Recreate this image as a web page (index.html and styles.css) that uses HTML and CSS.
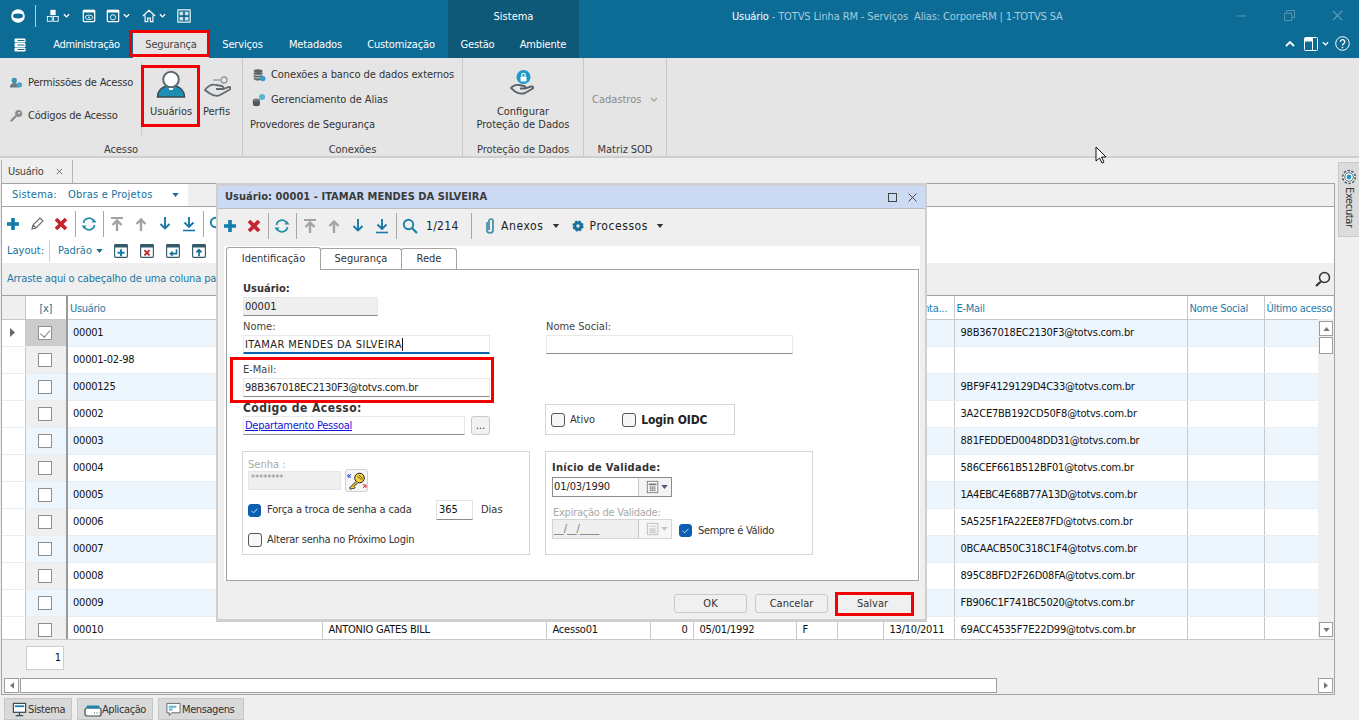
FILE: index.html
```html
<!DOCTYPE html>
<html lang="pt-BR">
<head>
<meta charset="utf-8">
<title>Usuário - TOTVS Linha RM</title>
<link rel="stylesheet" href="styles.css">
</head>
<body>
<svg class="defs" width="0" height="0" aria-hidden="true">
  <symbol id="plus" viewBox="0 0 16 16"><path d="M8 2v12M2 8h12" fill="none" stroke="#0f7cab" stroke-width="3.6"/></symbol>
  <symbol id="cross" viewBox="0 0 16 16"><path d="M3 3l10 10M13 3L3 13" fill="none" stroke="#c4262e" stroke-width="3.8"/></symbol>
  <symbol id="pencil" viewBox="0 0 16 16"><path d="M3 13l1-4 7-7 3 3-7 7z M4 9l3 3" fill="#fff" stroke="#666" stroke-width="1.1"/></symbol>
  <symbol id="refresh" viewBox="0 0 16 16"><path d="M2.5 7A5.6 5.6 0 0 1 12.6 4.6M13.5 9A5.6 5.6 0 0 1 3.4 11.4" fill="none" stroke="#2a8da6" stroke-width="1.7"/><path d="M10.5 6.5h5L13 3zM.5 9.5h5L3 13z" fill="#2a8da6"/></symbol>
  <symbol id="top" viewBox="0 0 16 16"><path d="M2 2h12" stroke="#a3a3a3" stroke-width="2"/><path d="M8 15V5M3.5 9L8 4.5 12.500 9" fill="none" stroke="#a3a3a3" stroke-width="2.400"/></symbol>
  <symbol id="up" viewBox="0 0 16 16"><path d="M8 15V3M3.500 8L8 3.500 12.500 8" fill="none" stroke="#a3a3a3" stroke-width="2.400"/></symbol>
  <symbol id="down" viewBox="0 0 16 16"><path d="M8 1v12M3.500 8L8 12.500 12.500 8" fill="none" stroke="#1a78a8" stroke-width="1.900"/></symbol>
  <symbol id="bottom" viewBox="0 0 16 16"><path d="M8 1v10M3.500 6.500L8 11 12.500 6.500" fill="none" stroke="#1a78a8" stroke-width="1.900"/><path d="M2 14.500h12" stroke="#1a78a8" stroke-width="1.600"/></symbol>
  <symbol id="search" viewBox="0 0 16 16"><circle cx="6.500" cy="6.500" r="4.700" fill="none" stroke="#1a82a8" stroke-width="1.900"/><path d="M10 10l5 5" stroke="#1a82a8" stroke-width="2.200"/></symbol>
  <symbol id="chev" viewBox="0 0 8 6"><path d="M1 1l3 3 3-3" fill="none" stroke="currentColor" stroke-width="1.500"/></symbol>
  <symbol id="tri" viewBox="0 0 8 5"><path d="M0 0h8L4 5z" fill="currentColor"/></symbol>
  <symbol id="check" viewBox="0 0 13 13"><rect x=".5" y=".5" width="12" height="12" rx="2.500" fill="#0c5fb0" stroke="#0c5fb0"/><path d="M3.500 6.800l2 2 4-4" fill="none" stroke="#cfe3f5" stroke-width="1"/></symbol>
  <symbol id="cal" viewBox="0 0 16 16"><rect x="1.500" y="1.500" width="12" height="13" fill="#fff" stroke="#777"/><path d="M3 4h9v2H3z" fill="#777"/><path d="M3.500 8h8M3.500 10h8M3.500 12h8M5.500 7v6M7.500 7v6M9.500 7v6" stroke="#999"/></symbol>
  <symbol id="calg" viewBox="0 0 16 16"><rect x="1.500" y="1.500" width="12" height="13" fill="#f4f4f4" stroke="#bbb"/><path d="M3.500 5h8M3.500 8h8M3.500 10h8M3.500 12h8M5.500 7v6M7.500 7v6M9.500 7v6" stroke="#ccc"/></symbol>
  <symbol id="lay" viewBox="0 0 16 16"><rect x=".7" y=".7" width="14.600" height="14.600" rx="1" fill="#fff" stroke="#34586a" stroke-width="1.300"/><path d="M1 1h14v3H1z" fill="#34586a"/></symbol>
</svg>

<header class="titlebar">
  <div class="quick">
    <svg class="q-logo" viewBox="0 0 16 16"><circle cx="8" cy="8" r="7.800" fill="#fff"/><ellipse cx="8" cy="8" rx="5.800" ry="2.800" fill="#0d6c96"/></svg>
    <span class="q-sep"></span>
    <svg class="q-ic" viewBox="0 0 16 16"><rect x="5" y="1" width="6" height="6" fill="#fff"/><rect x="1.500" y="8.500" width="5.500" height="5.500" fill="none" stroke="#fff"/><rect x="8.500" y="8.500" width="5.500" height="5.500" fill="none" stroke="#fff"/></svg>
    <svg class="q-ch"><use href="#chev"/></svg>
    <svg class="q-ic q-g1" viewBox="0 0 16 16"><rect x="1.500" y="1.500" width="13" height="13" rx="1" fill="none" stroke="#fff" stroke-width="1.400"/><path d="M1 1h14v3H1z" fill="#fff"/><ellipse cx="8" cy="9.500" rx="4.200" ry="2.600" fill="none" stroke="#fff"/><circle cx="8" cy="9.500" r="1" fill="#fff"/></svg>
    <svg class="q-ic q-g2" viewBox="0 0 16 16"><rect x="1.500" y="1.500" width="13" height="13" rx="1" fill="none" stroke="#fff" stroke-width="1.400"/><path d="M1 1h14v3H1z" fill="#fff"/><circle cx="8" cy="9.500" r="3" fill="none" stroke="#fff"/></svg>
    <svg class="q-ch"><use href="#chev"/></svg>
    <svg class="q-ic q-g1" viewBox="0 0 16 16"><path d="M1 8l7-6.500L15 8M3.500 7v7.500h3v-4h3v4h3V7" fill="none" stroke="#fff" stroke-width="1.300"/></svg>
    <svg class="q-ch"><use href="#chev"/></svg>
    <svg class="q-ic q-g3" viewBox="0 0 16 16"><rect x="1" y="1" width="14" height="14" fill="none" stroke="#fff" stroke-width="1.300"/><path d="M3 3h4v4H3zM9 3h4v4H9zM3 9h4v4H3zM9 9h4v4H9z" fill="#cfe0e8"/></svg>
  </div>
  <div class="sys-cell">Sistema</div>
  <div class="win-title"><span class="win-active">Usuário</span> - TOTVS Linha RM - Serviços&nbsp; Alias: CorporeRM | 1-TOTVS SA</div>
  <div class="win-ctl">
    <svg viewBox="0 0 12 12"><path d="M1 6.500h10" stroke="#5f9ab5"/></svg>
    <svg viewBox="0 0 12 12"><path d="M.5 3.500h8v8h-8zM3 3.500V.5h8.500v8h-3" fill="none" stroke="#5f9ab5"/></svg>
    <svg viewBox="0 0 12 12"><path d="M1 1l10 10M11 1L1 11" stroke="#6fa4bc" stroke-width="1.100"/></svg>
  </div>
</header>

<nav class="menubar">
  <svg class="m-stack" viewBox="0 0 12 14"><path d="M1 1h10v3H1zM1 5.500h10v3H1zM1 10h10v3H1z" fill="#fff" stroke="#fff" stroke-linejoin="round"/><path d="M3.500 2.500h7M3.500 7h7M3.500 11.500h7" stroke="#0d6c96"/></svg>
  <a class="m-item m-adm">Administração</a>
  <a class="m-item m-seg mark">Segurança</a>
  <a class="m-item m-srv">Serviços</a>
  <a class="m-item m-met">Metadados</a>
  <a class="m-item m-cus">Customização</a>
  <div class="m-dark"><a class="m-item m-ges">Gestão</a><a class="m-item m-amb">Ambiente</a></div>
  <div class="m-right">
    <svg class="m-up" viewBox="0 0 10 7"><path d="M1 6l4-4 4 4" fill="none" stroke="#fff" stroke-width="1.800"/></svg>
    <svg class="m-lay" viewBox="0 0 14 14"><rect x=".5" y=".5" width="13" height="13" rx="1" fill="none" stroke="#fff"/><path d="M1 1h7v3H1zM8.500 1v12" fill="#fff" stroke="#fff"/></svg>
    <svg class="q-ch"><use href="#chev"/></svg>
    <svg class="m-help" viewBox="0 0 15 15"><circle cx="7.500" cy="7.500" r="6.800" fill="none" stroke="#fff"/><path d="M5.300 5.800a2.200 2.200 0 1 1 3.500 1.800c-.8.600-1.300 1-1.300 2" fill="none" stroke="#fff" stroke-width="1.300"/><path d="M6.800 10.800h1.400v1.400H6.800z" fill="#fff"/></svg>
  </div>
</nav>

<section class="ribbon">
  <div class="rb-group rb-acesso">
    <div class="rb-body">
      <div class="rb-small">
        <div class="rb-line"><svg class="rb-ic" viewBox="0 0 16 16"><circle cx="6" cy="5" r="3" fill="#3d8fb5"/><path d="M1 13c0-3 2-5 5-5s5 2 5 5z" fill="#6d7a80"/><circle cx="12" cy="10" r="3" fill="#3ba9cf"/></svg>Permissões de Acesso</div>
        <div class="rb-line"><svg class="rb-ic" viewBox="0 0 16 16"><circle cx="11" cy="5" r="4" fill="#8b8b8b"/><path d="M8 8l-6 6" stroke="#8b8b8b" stroke-width="2.600"/><circle cx="11.500" cy="4.500" r="1.200" fill="#e5e5e5"/></svg>Códigos de Acesso</div>
      </div>
      <div class="rb-big-usr mark">
        <svg class="i-user" viewBox="0 0 30 28"><path d="M1.500 27c0-6 4-10 9-11h9c5 1 9 5 9 11z" fill="#1e8fb3" stroke="#3a4a52" stroke-width="1.500"/><circle cx="15" cy="9.500" r="7.800" fill="#fff" stroke="#5d6b72" stroke-width="2"/><path d="M12.500 18h5l-1 2h-3z" fill="#fff"/></svg>
        <span>Usuários</span>
      </div>
      <div class="rb-big-per">
        <svg class="i-perfis" viewBox="0 0 28 24"><path d="M2 14c3-4 7-6 11-5l6 1c2 .5 1.500 3-1 3h-5 7l6-2c2 0 2 2 0 3l-9 5c-4 2-8 0-11-2z" fill="none" stroke="#5f6a6f" stroke-width="1.800"/><circle cx="21" cy="4" r="3" fill="none" stroke="#8f9699" stroke-width="1.300"/><path d="M18 4h-8" stroke="#8f9699" stroke-width="1.300"/></svg>
        <span>Perfis</span>
      </div>
    </div>
    <div class="rb-label">Acesso</div>
  </div>
  <div class="rb-group rb-con">
    <div class="rb-body rb-col">
      <div class="rb-row"><svg class="rb-ic" viewBox="0 0 16 16"><ellipse cx="7" cy="3.500" rx="5" ry="2.200" fill="#59646a"/><path d="M2 5v7c0 1.200 2.200 2.200 5 2.200s5-1 5-2.200V5z" fill="#59646a"/><path d="M2 7.500c2 1.300 8 1.300 10 0M2 10.500c2 1.300 8 1.300 10 0" stroke="#e5e5e5" fill="none"/><circle cx="12.500" cy="12" r="3" fill="#2d9fd0"/></svg>Conexões a banco de dados externos</div>
      <div class="rb-row"><svg class="rb-ic" viewBox="0 0 16 16"><path d="M1 8v5c0 1 1.800 2 4 2s4-1 4-2V8z" fill="#4c565b"/><ellipse cx="5" cy="8" rx="4" ry="1.800" fill="#6d777c"/><circle cx="11.500" cy="4.500" r="3.500" fill="#5cb3d8"/></svg>Gerenciamento de Alias</div>
      <div class="rb-row rb-prov">Provedores de Segurança</div>
    </div>
    <div class="rb-label">Conexões</div>
  </div>
  <div class="rb-group rb-pro">
    <div class="rb-body rb-center">
      <svg class="i-prot" viewBox="0 0 28 27"><path d="M2 18c2-2.500 5-3.500 8-3l5 1c2 .5 1.500 2.500-1 2.500h-3 5l6-2c2.500-.5 3 1.500 1 2.500l-7 4c-4 1.500-7 .5-10-1.500z" fill="none" stroke="#55646b" stroke-width="1.900"/><circle cx="14.500" cy="7" r="7" fill="#1c9cc4"/><rect x="11.500" y="6.500" width="6" height="5" rx="1" fill="#fff"/><path d="M12.800 6.500V5a1.700 1.700 0 0 1 3.400 0v1.500" fill="none" stroke="#fff" stroke-width="1.100"/></svg>
      <span class="rb-t1">Configurar</span>
      <span>Proteção de Dados</span>
    </div>
    <div class="rb-label">Proteção de Dados</div>
  </div>
  <div class="rb-group rb-mat">
    <div class="rb-body rb-cad"><span>Cadastros</span><svg class="rb-chev"><use href="#chev"/></svg></div>
    <div class="rb-label">Matriz SOD</div>
  </div>
</section>

<div class="doc-tabs">
  <div class="doc-tab">Usuário <svg class="doc-x" viewBox="0 0 8 8"><path d="M1 1l6 6M7 1L1 7" stroke="#666" stroke-width="1.100"/></svg></div>
</div>

<main class="panel">
  <div class="sys-row">
    <div class="sys-sel"><span class="sys-lab">Sistema:</span><span class="sys-val">Obras e Projetos</span><svg class="tri"><use href="#tri"/></svg></div>
  </div>
  <div class="tools">
    <div class="tool-row">
      <span class="ti"><svg><use href="#plus"/></svg></span>
      <span class="ti"><svg><use href="#pencil"/></svg></span>
      <span class="ti"><svg><use href="#cross"/></svg></span>
      <span class="tsep"></span>
      <span class="ti"><svg><use href="#refresh"/></svg></span>
      <span class="tsep"></span>
      <span class="ti"><svg><use href="#top"/></svg></span>
      <span class="ti"><svg><use href="#up"/></svg></span>
      <span class="ti"><svg><use href="#down"/></svg></span>
      <span class="ti"><svg><use href="#bottom"/></svg></span>
      <span class="tsep"></span>
      <span class="ti"><svg><use href="#search"/></svg></span>
    </div>
    <div class="layout-row">
      <span class="lay-lab">Layout:</span><span class="lay-sep"></span><span class="lay-val">Padrão</span><svg class="tri lay-tri"><use href="#tri"/></svg>
      <span class="lay-ic lay-first"><svg viewBox="0 0 16 16"><use href="#lay"/><path d="M8 6v8M4 10h8" stroke="#0f7cab" stroke-width="2.200"/></svg></span>
      <span class="lay-ic"><svg viewBox="0 0 16 16"><use href="#lay"/><path d="M5 7l6 6M11 7l-6 6" stroke="#c4262e" stroke-width="2.200"/></svg></span>
      <span class="lay-ic"><svg viewBox="0 0 16 16"><use href="#lay"/><path d="M12 6v5H5M7.500 8.500L5 11l2.500 2.500" fill="none" stroke="#1a6f98" stroke-width="1.800"/></svg></span>
      <span class="lay-ic"><svg viewBox="0 0 16 16"><use href="#lay"/><path d="M8 14V7M5 9.500L8 6.500l3 3" fill="none" stroke="#1a6f98" stroke-width="2"/></svg></span>
    </div>
  </div>
  <div class="group-bar">
    <span>Arraste aqui o cabeçalho de uma coluna par</span>
    <svg class="gb-search" viewBox="0 0 16 16"><circle cx="9.500" cy="6.500" r="5" fill="none" stroke="#333" stroke-width="1.500"/><path d="M6 10.500l-5 4.500" stroke="#333" stroke-width="2.200"/></svg>
  </div>
  <div class="grid-wrap">
    <table class="grid">
      <colgroup><col class="c0"><col class="c1"><col class="c2"><col class="c3"><col class="c4"><col class="c5"><col class="c6"><col class="c7"><col class="c8"><col class="c9"><col class="c10"><col class="c11"><col class="c12"></colgroup>
      <thead>
        <tr><th class="h-ind"></th><th class="h-chk">[x]</th><th class="thick-l">Usuário</th><th></th><th></th><th></th><th></th><th></th><th></th><th>Data Conta...</th><th>E-Mail</th><th>Nome Social</th><th class="h-last">Último acesso</th></tr>
      </thead>
      <tbody>
        <tr><td class="ind"><svg class="ind-tri" viewBox="0 0 5 9"><path d="M0 0l5 4.500L0 9z"/></svg></td><td class="chk chk-sel"><i class="cb cb-on"></i></td><td>00001</td><td></td><td></td><td></td><td></td><td></td><td></td><td></td><td>98B367018EC2130F3@totvs.com.br</td><td></td><td></td></tr>
        <tr><td class="ind"></td><td class="chk"><i class="cb"></i></td><td>00001-02-98</td><td></td><td></td><td></td><td></td><td></td><td></td><td></td><td></td><td></td><td></td></tr>
        <tr><td class="ind"></td><td class="chk"><i class="cb"></i></td><td>0000125</td><td></td><td></td><td></td><td></td><td></td><td></td><td></td><td>9BF9F4129129D4C33@totvs.com.br</td><td></td><td></td></tr>
        <tr><td class="ind"></td><td class="chk"><i class="cb"></i></td><td>00002</td><td></td><td></td><td></td><td></td><td></td><td></td><td></td><td>3A2CE7BB192CD50F8@totvs.com.br</td><td></td><td></td></tr>
        <tr><td class="ind"></td><td class="chk"><i class="cb"></i></td><td>00003</td><td></td><td></td><td></td><td></td><td></td><td></td><td></td><td>881FEDDED0048DD31@totvs.com.br</td><td></td><td></td></tr>
        <tr><td class="ind"></td><td class="chk"><i class="cb"></i></td><td>00004</td><td></td><td></td><td></td><td></td><td></td><td></td><td></td><td>586CEF661B512BF01@totvs.com.br</td><td></td><td></td></tr>
        <tr><td class="ind"></td><td class="chk"><i class="cb"></i></td><td>00005</td><td></td><td></td><td></td><td></td><td></td><td></td><td></td><td>1A4EBC4E68B77A13D@totvs.com.br</td><td></td><td></td></tr>
        <tr><td class="ind"></td><td class="chk"><i class="cb"></i></td><td>00006</td><td></td><td></td><td></td><td></td><td></td><td></td><td></td><td>5A525F1FA22EE87FD@totvs.com.br</td><td></td><td></td></tr>
        <tr><td class="ind"></td><td class="chk"><i class="cb"></i></td><td>00007</td><td></td><td></td><td></td><td></td><td></td><td></td><td></td><td>0BCAACB50C318C1F4@totvs.com.br</td><td></td><td></td></tr>
        <tr><td class="ind"></td><td class="chk"><i class="cb"></i></td><td>00008</td><td></td><td></td><td></td><td></td><td></td><td></td><td></td><td>895C8BFD2F26D08FA@totvs.com.br</td><td></td><td></td></tr>
        <tr><td class="ind"></td><td class="chk"><i class="cb"></i></td><td>00009</td><td></td><td></td><td></td><td></td><td></td><td></td><td></td><td>FB906C1F741BC5020@totvs.com.br</td><td></td><td></td></tr>
        <tr class="r-last"><td class="ind"></td><td class="chk"><i class="cb"></i></td><td>00010</td><td>ANTONIO GATES BILL</td><td>Acesso01</td><td class="num">0</td><td>05/01/1992</td><td>F</td><td></td><td>13/10/2011</td><td>69ACC4535F7E22D99@totvs.com.br</td><td></td><td></td></tr>
      </tbody>
    </table>
    <div class="vscroll">
      <span class="sb-btn"><svg class="sb-tri sb-flip"><use href="#tri"/></svg></span>
      <span class="sb-thumb"></span>
      <span class="sb-btn sb-end"><svg class="sb-tri"><use href="#tri"/></svg></span>
    </div>
  </div>
  <div class="grid-foot"><span class="foot-cell">1</span></div>
  <div class="hscroll">
    <span class="hb-btn"><svg class="hb-tri" viewBox="0 0 5 8"><path d="M5 0L0 4l5 4z"/></svg></span>
    <span class="hb-thumb"></span>
    <span class="hb-btn hb-end"><svg class="hb-tri" viewBox="0 0 5 8"><path d="M0 0l5 4-5 4z"/></svg></span>
  </div>
</main>

<footer class="statusbar">
  <span class="st-btn st-a"><svg viewBox="0 0 16 16"><rect x="1.500" y="1.500" width="13" height="9.500" fill="#fff" stroke="#3c4b52" stroke-width="1.300"/><path d="M3 3.500h10v2H3z" fill="#1e86ad"/><path d="M8 11v3M4 14.500h8" stroke="#3c4b52" stroke-width="1.300"/></svg>Sistema</span>
  <span class="st-btn st-b"><svg class="st-wide" viewBox="0 0 18 14"><rect x="1" y="5" width="16" height="8" rx="2" fill="#fff" stroke="#3c4b52" stroke-width="1.200"/><path d="M3 5V3h12v2z" fill="#1e86ad" stroke="#1e86ad"/><path d="M10 10h1M12.500 10h1M15 10h.5" stroke="#3c4b52"/></svg>Aplicação</span>
  <span class="st-btn st-c"><svg viewBox="0 0 16 16"><path d="M1 1.500h14v10H6l-2.500 3v-3H1z" fill="#fff" stroke="#5a6a72"/><path d="M3 4h8v2H3zM3 7h4v2H3z" fill="#5db4d6"/></svg>Mensagens</span>
</footer>

<aside class="exec-tab">
  <svg class="exec-gear" viewBox="0 0 16 16"><circle cx="8" cy="8" r="6.300" fill="#fff" stroke="#56656d" stroke-width="1.700" stroke-dasharray="2.600 1.300"/><circle cx="8" cy="8" r="4.300" fill="#fff" stroke="#56656d"/><circle cx="8" cy="8" r="2.400" fill="#1c9cc4"/></svg>
  <span class="exec-txt">Executar</span>
</aside>

<svg class="cursor" viewBox="0 0 13 18"><path d="M1 1v14l3.500-3 2.500 5 2-1-2.500-5h4.500z" fill="#fff" stroke="#111"/></svg>

<section class="dialog">
  <div class="dlg-title">
    <span>Usuário: 00001 - ITAMAR MENDES DA SILVEIRA</span>
    <span class="dlg-ctl">
      <svg viewBox="0 0 9 9"><rect x=".5" y=".5" width="8" height="8" fill="none" stroke="#444"/></svg>
      <svg viewBox="0 0 9 9"><path d="M.5.5l8 8M8.500.5l-8 8" stroke="#444"/></svg>
    </span>
  </div>
  <div class="dlg-tools">
    <span class="ti"><svg><use href="#plus"/></svg></span>
    <span class="ti"><svg><use href="#cross"/></svg></span>
    <span class="tsep"></span>
    <span class="ti"><svg><use href="#refresh"/></svg></span>
    <span class="tsep"></span>
    <span class="ti"><svg><use href="#top"/></svg></span>
    <span class="ti"><svg><use href="#up"/></svg></span>
    <span class="ti"><svg><use href="#down"/></svg></span>
    <span class="ti"><svg><use href="#bottom"/></svg></span>
    <span class="tsep"></span>
    <span class="ti"><svg><use href="#search"/></svg></span>
    <span class="dlg-count">1/214</span>
    <span class="tsep dlg-sep2"></span>
    <svg class="dlg-clip" viewBox="0 0 12 18"><path d="M3 5v8a3 3 0 0 0 6 0V4a2 2 0 0 0-4 0v9" fill="none" stroke="#3f8ea8" stroke-width="1.700"/></svg>
    <span class="dlg-menu">Anexos</span><svg class="tri dlg-tri"><use href="#tri"/></svg>
    <svg class="dlg-gear" viewBox="0 0 16 16"><circle cx="8" cy="8" r="5.200" fill="#1a6f98" stroke="#1a6f98" stroke-width="2.400" stroke-dasharray="2.400 1.700"/><circle cx="8" cy="8" r="5" fill="#1a6f98"/><circle cx="8" cy="8" r="2" fill="#dbe9f0"/></svg>
    <span class="dlg-menu">Processos</span><svg class="tri dlg-tri"><use href="#tri"/></svg>
  </div>
  <div class="dlg-client">
    <div class="tabs">
      <span class="tab tab-on">Identificação</span>
      <span class="tab tab-seg">Segurança</span>
      <span class="tab tab-rede">Rede</span>
    </div>
    <div class="tab-panel">
      <div class="f-left">
        <label class="lb lb-b">Usuário:</label>
        <div class="inp inp-ro inp-user">00001</div>
        <label class="lb f-gap">Nome:</label>
        <div class="inp inp-focus inp-name inp-caps">ITAMAR MENDES DA SILVEIRA<i class="caret"></i></div>
        <div class="mail-box mark">
          <label class="lb">E-Mail:</label>
          <div class="inp inp-name inp-mail">98B367018EC2130F3@totvs.com.br</div>
        </div>
        <label class="lb lb-b lb-code f-gap">Código de Acesso:</label>
        <div class="code-row">
          <div class="inp inp-code"><a class="link">Departamento Pessoal</a></div>
          <span class="dots">...</span>
        </div>
      </div>
      <div class="f-right">
        <label class="lb nsoc">Nome Social:</label>
        <div class="inp inp-soc"></div>
        <div class="box box-at">
          <span class="cbl"><i class="cb2"></i>Ativo</span>
          <span class="cbl cbl-oidc"><i class="cb2"></i><b>Login OIDC</b></span>
        </div>
      </div>
      <div class="box box-senha">
        <label class="lb lb-dis">Senha :</label>
        <div class="senha-row">
          <div class="inp-pass">********</div>
          <span class="key-btn"><svg viewBox="0 0 20 20"><circle cx="12.500" cy="7" r="4.800" fill="#f3d23a" stroke="#222"/><path d="M9 10.500l-6.500 6.500 1.500 1.500 1.500-1.500 1 1 1.500-1.500-1-1 4-4" fill="#f3d23a" stroke="#222"/><path d="M10.500 5l4 4M12 4l4 4" stroke="#222" stroke-width=".7"/><path d="M1 6l3-3M1 6V3M1 6h3" stroke="#1a3fe0" fill="none"/><path d="M19 14l-3 3M19 14h-3M19 14v3" stroke="#e0202a" fill="none"/></svg></span>
        </div>
        <div class="chk-row">
          <svg class="cb-blue"><use href="#check"/></svg><span class="force">Força a troca de senha a cada</span>
          <span class="inp-days">365</span><span class="dias">Dias</span>
        </div>
        <div class="chk-row chk-row2"><i class="cb2"></i><span class="alt">Alterar senha no Próximo Login</span></div>
      </div>
      <div class="box box-val">
        <label class="lb lb-b lb-ini">Início de Validade:</label>
        <div class="date date-on"><span class="date-v">01/03/1990</span><span class="date-b"><svg class="d-cal"><use href="#cal"/></svg><svg class="d-tri"><use href="#tri"/></svg></span></div>
        <label class="lb lb-dis exp">Expiração de Validade:</label>
        <div class="exp-row">
          <div class="date date-dis"><span class="date-v">__/__/____</span><span class="date-b"><svg class="d-cal"><use href="#calg"/></svg><svg class="d-tri"><use href="#tri"/></svg></span></div>
          <svg class="cb-blue"><use href="#check"/></svg><span class="sempre">Sempre é Válido</span>
        </div>
      </div>
    </div>
  </div>
  <div class="dlg-foot">
    <span class="btn">OK</span>
    <span class="btn">Cancelar</span>
    <span class="btn btn-save mark">Salvar</span>
  </div>
</section>
</body>
</html>
```

FILE: styles.css
```css
*, *::before, *::after { box-sizing: border-box; }
html, body { margin: 0; padding: 0; }
body {
  position: relative;
  width: 1359px;
  height: 720px;
  overflow: hidden;
  background: #efefef;
  color: #333;
  font-family: "DejaVu Sans Condensed", "DejaVu Sans", sans-serif;
  font-stretch: condensed;
  font-size: 11px;
  line-height: 14px;
}
.defs { position: absolute; }
svg { display: block; flex: none; }
i { display: block; }

/* red annotation frames */
.mark { position: relative; }
.mark::after {
  content: "";
  position: absolute;
  border: 3px solid #f40000;
  pointer-events: none;
}

/* title bar */
.titlebar { display: flex; height: 29px; background: #0d6c96; color: #fff; }
.quick { width: 448px; display: flex; align-items: center; padding: 2px 0 0 11px; }
.q-logo { width: 14px; height: 14px; }
.q-sep { width: 1px; height: 22px; background: #b7d2df; margin: 0 10px; }
.q-ic { width: 14px; height: 14px; }
.q-ch { width: 7px; height: 6px; margin-left: 3px; color: #fff; }
.q-g1 { margin-left: 12px; }
.q-g2 { margin-left: 10px; }
.q-g3 { margin-left: 11px; }
.sys-cell { width: 131px; background: #0e5878; text-align: center; line-height: 33px; }
.win-title { padding-left: 153px; line-height: 33px; color: #a5cbdd; white-space: nowrap; flex: 1; letter-spacing: -0.13px; }
.win-active { color: #fff; }
.win-ctl { display: flex; align-items: center; gap: 37px; width: 130px; padding: 2px 0 0 0; margin-right: 16px; justify-content: flex-end; }
.win-ctl svg { width: 11px; height: 11px; }

/* menu */
.menubar { display: flex; height: 29px; background: #0d6c96; color: #fff; line-height: 31px; letter-spacing: -0.15px; }
.m-stack { width: 12px; height: 14px; margin: 9px 14px 0 14px; }
.m-item { display: block; text-align: center; white-space: nowrap; }
.m-adm { width: 93px; letter-spacing: -0.35px; }
.m-seg { width: 76px; background: #e5e5e5; color: #444; margin-top: 3px; line-height: 25px; }
.m-seg::after { left: -4px; right: -1px; top: -2px; bottom: 1px; }
.m-srv { width: 67px; }
.m-met { width: 79px; }
.m-cus { width: 92px; margin-right: 1px; }
.m-dark { display: flex; width: 131px; background: #0e5878; }
.m-ges { width: 59px; }
.m-amb { width: 72px; }
.m-right { flex: 1; display: flex; align-items: center; padding-left: 706px; }
.m-up { width: 10px; height: 7px; }
.m-lay { width: 14px; height: 14px; margin-left: 9px; }
.m-right .q-ch { margin-left: 4px; }
.m-help { width: 15px; height: 15px; margin-left: 6px; }

/* ribbon */
.ribbon { display: flex; height: 100px; background: #e5e5e5; border-bottom: 2px solid #cfcfcf; }
.rb-group { display: flex; flex-direction: column; border-right: 1px solid #c9c9c9; height: 98px; }
.rb-body { flex: 1; display: flex; min-height: 0; }
.rb-label { height: 16px; line-height: 20px; text-align: center; white-space: nowrap; color: #3a3a3a; letter-spacing: -0.05px; }
.rb-acesso { width: 243px; }
.rb-small { width: 142px; border-right: 1px solid #cdcdcd; height: 73px; margin-top: 4px; padding: 14px 0 0 9px; display: flex; flex-direction: column; gap: 19px; }
.rb-line, .rb-row { display: flex; align-items: center; white-space: nowrap; }
.rb-line { letter-spacing: -0.18px; }
.rb-row { letter-spacing: -0.06px; }
.rb-ic { width: 14px; height: 14px; margin-right: 5px; }
.rb-big-usr { width: 58px; display: flex; flex-direction: column; align-items: center; padding-top: 5px; height: 62px; margin-top: 7px; letter-spacing: -0.1px; }
.rb-big-usr::after { left: -1px; right: 0; top: 0; height: 62px; }
.i-user { width: 30px; height: 28px; }
.rb-big-usr span { margin-top: 7px; }
.rb-big-per { width: 33px; display: flex; flex-direction: column; align-items: center; padding-top: 18px; }
.i-perfis { width: 28px; height: 24px; }
.rb-big-per span { margin-top: 5px; }
.rb-con { width: 220px; }
.rb-col { flex-direction: column; padding: 10px 0 0 9px; gap: 11px; }
.rb-prov { margin-left: -2px; }
.rb-pro { width: 121px; }
.rb-center { flex-direction: column; align-items: center; padding-top: 12px; line-height: 13px; }
.i-prot { width: 28px; height: 27px; }
.rb-t1 { margin-top: 8px; }
.rb-mat { width: 83px; }
.rb-cad { color: #8b8b8b; align-items: center; padding: 2px 0 0 8px; }
.rb-chev { width: 8px; height: 6px; margin-left: 9px; color: #a5a5a5; }

/* document tab */
.doc-tabs { height: 25px; padding: 2px 0 0 1px; }
.doc-tab { width: 72px; height: 23px; border-right: 1px solid #b5b5b5; border-left: 1px solid #b5b5b5; padding-left: 6px; line-height: 22px; display: flex; align-items: center; color: #444; letter-spacing: -0.3px; }
.doc-x { width: 7px; height: 7px; margin-left: 12px; }

/* main panel */
.panel { width: 1334px; height: 512px; margin-left: 1px; border: 1px solid #a3a3a3; display: flex; flex-direction: column; background: #efefef; color: #1b78a5; }
.sys-row { height: 23px; border-bottom: 1px solid #a3a3a3; flex: none; }
.sys-sel { width: 186px; height: 22px; background: #fff; display: flex; align-items: center; padding-left: 10px; color: #11719e; letter-spacing: 0.2px; }
.sys-lab { width: 56px; }
.tri { width: 7px; height: 4px; color: #1b6f97; }
.sys-sel .tri { margin-left: 19px; }
.tools { height: 56px; background: #fff; flex: none; }
.tool-row { height: 33px; display: flex; align-items: center; margin-left: -1px; }
.ti { width: 24px; display: flex; justify-content: center; }
.ti svg { width: 16px; height: 16px; }
.tsep { width: 4px; height: 26px; position: relative; }
.tsep::before { content: ""; position: absolute; left: 2px; top: 0; bottom: 0; border-left: 1px solid #a8a8a8; }
.layout-row { display: flex; align-items: center; height: 21px; padding-left: 5px; color: #1b78a5; }
.lay-sep { width: 1px; height: 22px; background: #d0d0d0; margin: 0 7px 0 5px; }
.lay-lab { color: #156f9b; }
.lay-val { margin-left: 1px; }
.lay-tri { margin-left: 4px; }
.lay-ic { width: 14px; margin-right: 12px; }
.lay-ic svg { width: 14px; height: 14px; }
.lay-first { margin-left: 11px; }
.group-bar { height: 33px; border-bottom: 1px solid #a3a3a3; display: flex; align-items: center; justify-content: space-between; padding: 0 3px 0 5px; flex: none; }
.group-bar span { letter-spacing: -0.15px; white-space: nowrap; }
.gb-search { width: 16px; height: 16px; }

/* grid */
.grid-wrap { position: relative; height: 344px; overflow: hidden; flex: none; border-bottom: 1px solid #c8c8c8; }
.grid { border-collapse: collapse; table-layout: fixed; width: 1331px; }
.c0 { width: 23px; } .c1 { width: 42px; } .c2 { width: 255px; } .c3 { width: 224px; }
.c4 { width: 104px; } .c5 { width: 43px; } .c6 { width: 103px; } .c7 { width: 41px; }
.c8 { width: 46px; } .c9 { width: 71px; } .c10 { width: 233px; } .c11 { width: 77px; } .c12 { width: 69px; }
.grid th { height: 23px; padding: 3px 0 0 2px; background: #fff; font-weight: 400; text-align: left; color: #1b7cab; border-right: 1px solid #c8c8c8; border-bottom: 1px solid #c8c8c8; white-space: nowrap; overflow: hidden; letter-spacing: -0.3px; }
.grid th.h-ind { background: #efefef; border-right: 1px solid #c8c8c8; }
.grid th.h-chk { text-align: center; padding: 3px 0 0; border-right: 2px solid #9a9a9a; color: #1b6f97; }
.grid th.h-last { border-right: 0; overflow: visible; }
.grid td { height: 27px; padding: 0 0 0 6px; background: #fff; color: #111; white-space: nowrap; overflow: hidden; border-right: 1px solid #c8c8c8; border-bottom: 1px solid #e6edf3; letter-spacing: -0.22px; }
.grid td:nth-child(3) { padding-left: 5px; }
.grid tbody tr:nth-child(odd) td { background: #eef6fd; }
.grid tbody tr td.ind { background: #fff; padding: 0 0 0 8px; }
.grid tbody tr td.chk { background: inherit; padding: 0 0 0 12px; border-right: 2px solid #9a9a9a; }
.grid tbody tr:nth-child(odd) td.chk { background: #eef6fd; }
.grid tbody tr:nth-child(odd) td.chk-sel { background: #cccccc; }
.grid td.num { padding: 0 5px 0 0; text-align: right; }
.ind-tri { width: 5px; height: 9px; fill: #666; }
.cb { width: 14px; height: 14px; border: 1px solid #8e8e8e; background: #fff; }
.cb-on { position: relative; }
.cb-on::after { content: ""; position: absolute; left: 3px; top: 1px; width: 6px; height: 9px; border: solid #888; border-width: 0 1px 1px 0; transform: rotate(40deg); }
.vscroll { position: absolute; right: 0; top: 23px; bottom: 0; width: 16px; background: #efefef; display: flex; flex-direction: column; padding: 2px 1px 2px 1px; }
.sb-btn { height: 15px; border: 1px solid #9d9d9d; background: #fff; display: flex; align-items: center; justify-content: center; flex: none; }
.sb-thumb { height: 17px; border: 1px solid #9d9d9d; background: #fff; margin-top: 1px; flex: none; }
.sb-end { margin-top: auto; }
.sb-tri { width: 7px; height: 4px; color: #777; }
.sb-flip { transform: rotate(180deg); }
.grid-foot { height: 38px; padding: 6px 0 0 24px; flex: none; }
.foot-cell { display: block; width: 38px; height: 24px; border: 1px solid #cdcdcd; background: #fff; color: #111; text-align: right; line-height: 22px; padding-right: 2px; }
.hscroll { display: flex; height: 15px; margin: 0 1px 0 2px; border-top: 0; }
.hb-btn { width: 15px; height: 15px; border: 1px solid #9d9d9d; background: #fff; display: flex; align-items: center; justify-content: center; flex: none; }
.hb-tri { width: 4px; height: 7px; fill: #777; }
.hb-thumb { width: 977px; height: 15px; border: 1px solid #9d9d9d; background: #fff; margin-left: 1px; }
.hb-end { margin-left: auto; }

/* status bar */
.statusbar { display: flex; gap: 5px; height: 25px; padding: 3px 0 0 4px; color: #333; letter-spacing: -0.4px; }
.st-btn { display: flex; align-items: center; height: 22px; background: #d9d9d9; border: 1px solid #c6c6c6; padding: 1px 0 0 7px; }
.st-btn svg { width: 15px; height: 15px; margin-right: 1px; }
.st-btn svg.st-wide { width: 18px; height: 14px; margin-right: 0; }
.st-a { width: 68px; }
.st-b { width: 76px; padding-left: 6px; }
.st-c { width: 86px; }

/* side tab + cursor */
.exec-tab { position: absolute; left: 1338px; top: 162px; width: 21px; height: 75px; background: #dcdcdc; border: 1px solid #c8c8c8; border-right: 0; display: flex; flex-direction: column; align-items: center; padding-top: 6px; }
.exec-gear { width: 16px; height: 16px; }
.exec-txt { writing-mode: vertical-rl; margin-top: 2px; line-height: 14px; color: #333; letter-spacing: -0.35px; }
.cursor { position: absolute; left: 1095px; top: 146px; width: 13px; height: 18px; }

/* dialog */
.dialog { position: absolute; left: 216px; top: 183px; width: 711px; height: 439px; border: 2px solid #cfcfcf; border-width: 3px 2px; background: #efefef; display: flex; flex-direction: column; color: #333; }
.dlg-title { height: 23px; flex: none; background: #ccdaf3; border-bottom: 1px solid #bcbcbc; display: flex; align-items: center; justify-content: space-between; padding: 0 8px 0 7px; font-weight: 700; color: #3a3a3a; font-size: 11px; letter-spacing: 0.05px; }
.dlg-ctl { display: flex; gap: 11px; }
.dlg-ctl svg { width: 9px; height: 9px; }
.dlg-tools { height: 37px; flex: none; display: flex; align-items: center; padding-bottom: 3px; color: #222; }
.dlg-count { margin-left: 4px; width: 33px; font-size: 12px; letter-spacing: 0.3px; }
.dlg-sep2 { margin-left: 10px; }
.dlg-clip { width: 12px; height: 18px; margin-left: 11px; }
.dlg-menu { font-size: 12px; margin-left: 5px; white-space: nowrap; letter-spacing: 0.6px; }
.dlg-tri { color: #333; margin-left: 8px; width: 8px; height: 4px; }
.dlg-gear { width: 14px; height: 14px; margin-left: 11px; }
.dlg-client { height: 335px; flex: none; background: #fff; margin: 0 5px 0 6px; padding: 1px 0 0 2px; display: flex; flex-direction: column; }
.tabs { display: flex; height: 22px; flex: none; align-items: flex-end; position: relative; z-index: 1; }
.tab { height: 21px; border: 1px solid #a3a3a3; border-bottom: 0; border-radius: 3px 3px 0 0; text-align: center; line-height: 20px; background: #fff; margin-left: -1px; }
.tab-on { width: 95px; height: 23px; margin-left: 0; margin-bottom: -1px; line-height: 21px; }
.tab-seg { width: 82px; }
.tab-rede { width: 56px; }
.tab-panel { width: 693px; height: 312px; border: 1px solid #a3a3a3; padding: 12px 0 0 15px; display: grid; grid-template-columns: 303px 268px; grid-template-rows: 153px auto; align-content: start; }
.lb { display: block; height: 15px; line-height: 14px; white-space: nowrap; color: #444; }
.lb-b { font-weight: 700; color: #333; }
.lb-code { font-size: 12px; letter-spacing: 0.45px; }
.lb-ini { letter-spacing: 0.3px; }
.lb-dis { color: #a9a9a9; }
.f-left { padding-left: 1px; }
.f-gap { margin-top: 4px; }
.inp { height: 19px; border: 1px solid #e8e8e8; border-bottom: 1px solid #8c8c8c; background: #fff; line-height: 17px; padding-left: 1px; white-space: nowrap; color: #222; display: flex; align-items: center; }
.inp-ro { background: #efefef; }
.inp-user { width: 135px; }
.inp-name { width: 247px; }
.inp-caps { letter-spacing: 0.45px; }
.inp-mail { letter-spacing: -0.23px; }
.inp-focus { border-bottom: 2px solid #0c63b0; }
.caret { width: 1px; height: 13px; background: #111; }
.mail-box { margin-top: 9px; height: 34px; }
.mail-box::after { left: -13px; top: -6px; width: 264px; height: 46px; }
.code-row { display: flex; align-items: center; gap: 6px; }
.inp-code { width: 222px; letter-spacing: -0.25px; }
.link { color: #1414d8; text-decoration: underline; }
.dots { width: 19px; height: 19px; border: 1px solid #c9c9c9; border-radius: 3px; background: #f2f2f2; text-align: center; line-height: 17px; }
.nsoc { margin-top: 38px; padding-left: 1px; }
.inp-soc { width: 247px; margin-left: 1px; }
.box { border: 1px solid #d5d5d5; }
.box-at { width: 190px; height: 31px; margin-top: 50px; display: flex; align-items: center; padding-left: 5px; }
.cbl { display: flex; align-items: center; gap: 5px; }
.cbl-oidc { margin-left: 27px; }
.cbl b { font-size: 12px; color: #222; letter-spacing: -0.1px; }
.cb2 { width: 14px; height: 14px; border: 1px solid #555; border-radius: 3px; background: #f7f7f7; flex: none; }
.box-senha { width: 288px; height: 104px; margin-top: 16px; padding: 6px 0 0 5px; }
.senha-row { display: flex; align-items: center; height: 23px; margin-top: -4px; }
.inp-pass { width: 93px; height: 19px; background: #efefef; color: #888; border: 1px solid #e6e6e6; padding-left: 2px; line-height: 13px; font-size: 9px; }
.key-btn { width: 23px; height: 23px; border: 1px solid #d0d0d0; border-radius: 3px; background: #f6f6f6; margin-left: 4px; padding: 1px; }
.key-btn svg { width: 20px; height: 20px; }
.chk-row { display: flex; align-items: center; height: 20px; margin-top: 8px; }
.chk-row .cb2 { margin-right: 5px; }
.cb-blue { width: 13px; height: 13px; margin-right: 6px; }
.chk-row2 { margin-top: 10px; }
.force { width: 147px; letter-spacing: -0.15px; white-space: nowrap; }
.alt { letter-spacing: -0.25px; white-space: nowrap; }
.inp-days { width: 37px; height: 20px; border: 1px solid #e3e3e3; border-bottom: 1px solid #8c8c8c; margin-left: 22px; padding-left: 2px; line-height: 18px; color: #111; }
.dias { margin-left: 8px; }
.box-val { width: 268px; height: 104px; margin-top: 16px; padding: 9px 0 0 6px; }
.date { display: flex; width: 120px; height: 20px; border: 1px solid #8c8c8c; }
.date-on { margin-top: 1px; }
.date-v { width: 85px; padding-left: 1px; line-height: 18px; color: #222; background: #fff; letter-spacing: -0.1px; }
.date-b { flex: 1; display: flex; align-items: center; padding-left: 7px; border-left: 1px solid #c8c8c8; background: #f4f4f4; }
.d-cal { width: 14px; height: 14px; }
.d-tri { width: 7px; height: 4px; color: #4f5b70; margin-left: 1px; }
.exp { margin-top: 9px; padding-left: 1px; letter-spacing: -0.25px; }
.exp-row { display: flex; align-items: center; margin-top: -2px; }
.exp-row .cb-blue { margin: 3px 6px 0 7px; }
.sempre { letter-spacing: -0.3px; white-space: nowrap; margin-top: 3px; }
.date-dis { border-color: #d5d5d5; }
.date-dis .date-v { background: #efefef; color: #777; }
.date-dis .date-b { background: #f6f6f6; }
.date-dis .d-tri { color: #c5c5c5; }
.dlg-foot { flex: 1; display: flex; justify-content: flex-end; gap: 8px; padding: 13px 14px 0 0; }
.btn { width: 73px; height: 19px; border: 1px solid #c9c9c9; border-radius: 3px; background: #f0f0f0; text-align: center; line-height: 17px; color: #333; }
.btn-save { border-color: #efefef; margin-left: 2px; padding-right: 4px; }
.btn-save::after { left: -4px; top: -3px; width: 79px; height: 24px; }
```
